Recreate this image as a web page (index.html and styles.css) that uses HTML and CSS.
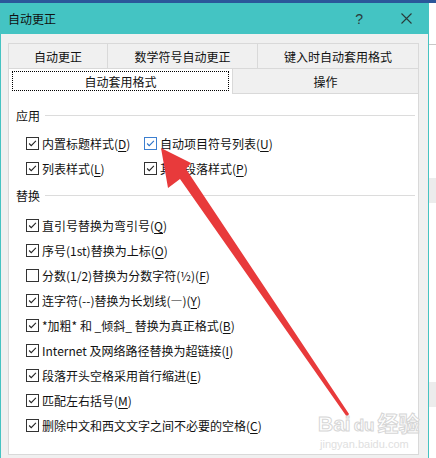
FILE: index.html
```html
<!DOCTYPE html>
<html lang="zh-CN">
<head>
<meta charset="utf-8">
<link rel="stylesheet" href="styles.css">
</head>
<body>
<div class="topstrip"></div>
<div class="screen">
  <div class="dialog">
    <div class="titlebar">
      <span class="title">自动更正</span>
      <span class="help">?</span>
      <span class="close"><svg width="11" height="11" viewBox="0 0 11 11"><path d="M0.5 0.5 L10.5 10.5 M10.5 0.5 L0.5 10.5" stroke="#2a3a3a" stroke-width="1.1" fill="none"/></svg></span>
    </div>
    <div class="body">
      <div class="tabrow">
        <div class="tab first w100">自动更正</div>
        <div class="tab w150">数学符号自动更正</div>
        <div class="tab w161">键入时自动套用格式</div>
      </div>
      <div class="tabrow">
        <div class="tab first sel"><span class="focus">自动套用格式</span></div>
        <div class="tab w186">操作</div>
      </div>
      <div class="panel">
        <div class="group-head head-apply"><span>应用</span><i class="rule"></i></div>
        <div class="grid-apply">
          <label class="item"><span class="cb on"><svg viewBox="0 0 13 13"><path d="M2.5 6.5 L5 9 L10.5 3.5"/></svg></span><span class="txt">内置标题样式(<u>D</u>)</span></label>
          <label class="item"><span class="cb on blue"><svg viewBox="0 0 13 13"><path d="M2.5 6.5 L5 9 L10.5 3.5"/></svg></span><span class="txt">自动项目符号列表(<u>U</u>)</span></label>
          <label class="item"><span class="cb on"><svg viewBox="0 0 13 13"><path d="M2.5 6.5 L5 9 L10.5 3.5"/></svg></span><span class="txt">列表样式(<u>L</u>)</span></label>
          <label class="item"><span class="cb on"><svg viewBox="0 0 13 13"><path d="M2.5 6.5 L5 9 L10.5 3.5"/></svg></span><span class="txt">其他段落样式(<u>P</u>)</span></label>
        </div>
        <div class="group-head head-replace"><span>替换</span><i class="rule"></i></div>
        <div class="list-replace">
          <label class="item"><span class="cb on"><svg viewBox="0 0 13 13"><path d="M2.5 6.5 L5 9 L10.5 3.5"/></svg></span><span class="txt">直引号替换为弯引号(<u>Q</u>)</span></label>
          <label class="item"><span class="cb on"><svg viewBox="0 0 13 13"><path d="M2.5 6.5 L5 9 L10.5 3.5"/></svg></span><span class="txt">序号(1st)替换为上标(<u>O</u>)</span></label>
          <label class="item"><span class="cb"></span><span class="txt">分数(1/2)替换为分数字符(½)(<u>F</u>)</span></label>
          <label class="item"><span class="cb on"><svg viewBox="0 0 13 13"><path d="M2.5 6.5 L5 9 L10.5 3.5"/></svg></span><span class="txt">连字符(--)替换为长划线(—)(<u>Y</u>)</span></label>
          <label class="item"><span class="cb on"><svg viewBox="0 0 13 13"><path d="M2.5 6.5 L5 9 L10.5 3.5"/></svg></span><span class="txt">*加粗* 和 _倾斜_ 替换为真正格式(<u>B</u>)</span></label>
          <label class="item"><span class="cb on"><svg viewBox="0 0 13 13"><path d="M2.5 6.5 L5 9 L10.5 3.5"/></svg></span><span class="txt">Internet 及网络路径替换为超链接(<u>I</u>)</span></label>
          <label class="item"><span class="cb on"><svg viewBox="0 0 13 13"><path d="M2.5 6.5 L5 9 L10.5 3.5"/></svg></span><span class="txt">段落开头空格采用首行缩进(<u>E</u>)</span></label>
          <label class="item"><span class="cb on"><svg viewBox="0 0 13 13"><path d="M2.5 6.5 L5 9 L10.5 3.5"/></svg></span><span class="txt">匹配左右括号(<u>M</u>)</span></label>
          <label class="item"><span class="cb on"><svg viewBox="0 0 13 13"><path d="M2.5 6.5 L5 9 L10.5 3.5"/></svg></span><span class="txt">删除中文和西文文字之间不必要的空格(<u>C</u>)</span></label>
        </div>
      </div>
    </div>
  </div>
  <div class="outside">
    <div class="out-line"></div>
    <div class="out-block b1"></div>
    <div class="out-block b2"></div>
  </div>
</div>
<svg class="arrow" width="436" height="458" viewBox="0 0 436 458">
  <polygon points="161,148 191,163 186,169 349,414 347,417 180,179 168,188" fill="#e83a3b"/>
</svg>
<div class="watermark">
  <div class="wm-main">Bai<span class="du">du</span>经验</div>
  <div class="wm-sub">jingyan.baidu.com</div>
</div>
</body>
</html>
```
FILE: styles.css
```css
* { box-sizing: border-box; }
html, body { margin: 0; padding: 0; }
body {
  width: 436px;
  height: 458px;
  overflow: hidden;
  background: #ffffff;
  font-family: "Noto Sans CJK SC", "Noto Sans", sans-serif;
  font-size: 12px;
  color: #111;
  position: relative;
}
.topstrip { height: 3px; background: #2b579a; }
.screen { display: flex; height: 455px; }
.dialog {
  width: 429px;
  height: 455px;
  border-left: 1px solid #46c3c2;
  border-right: 1px solid #46c3c2;
  display: flex;
  flex-direction: column;
}
.titlebar {
  height: 31px;
  background: #44c4c3;
  display: flex;
  align-items: center;
  padding-left: 7px;
}
.title { flex: 1; color: #111; line-height: 31px; }
.help { font-family: "Liberation Sans", sans-serif; font-size: 14px; color: #2a3a3a; margin-right: 38px; }
.close { width: 11px; height: 11px; margin-right: 16px; display: flex; }
.body {
  flex: 1;
  background: #f0f0f0;
  padding: 9px 9px 3px 7px;
  display: flex;
  flex-direction: column;
}
.tabrow { display: flex; height: 25px; align-items: flex-start; }
.tab {
  height: 25px;
  border-top: 1px solid #d9d9d9;
  border-right: 1px solid #d9d9d9;
  display: flex;
  align-items: center;
  justify-content: center;
  padding-top: 1px;
  color: #111;
}
.tab.first { border-left: 1px solid #d9d9d9; }
.w100 { width: 100px; }
.w150 { width: 150px; }
.w161 { width: 161px; }
.w186 { width: 186px; }
.tab.sel {
  width: 225px;
  height: 26px;
  background: #ffffff;
  position: relative;
  z-index: 1;
  padding: 2px 3px 3px 3px;
  align-items: stretch;
}
.focus {
  flex: 1;
  border: 1px dotted #000;
  display: flex;
  align-items: center;
  justify-content: center;
}
.panel {
  height: 362px;
  background: #ffffff;
  border: 1px solid #d9d9d9;
  padding: 11px 0 0 7px;
}
.group-head {
  height: 20px;
  display: flex;
  align-items: center;
  gap: 5px;
  padding-right: 3px;
}
.rule { flex: 1; height: 1px; background: #dcdcdc; }
.head-replace { margin-top: 4px; }
.grid-apply {
  margin-top: 6px;
  display: grid;
  grid-template-columns: 118px auto;
  padding-left: 10px;
}
.list-replace {
  margin-top: 8px;
  padding-left: 10px;
  display: flex;
  flex-direction: column;
}
.item {
  height: 25px;
  display: flex;
  align-items: center;
  gap: 3px;
  white-space: nowrap;
}
.txt u { text-decoration: underline; text-underline-offset: 2px; }
.cb {
  width: 13px;
  height: 13px;
  border: 1px solid #333;
  background: #fff;
  flex: none;
  display: flex;
}
.cb svg { width: 11px; height: 11px; }
.cb svg path { fill: none; stroke: #222; stroke-width: 1.3; }
.cb.blue { border-color: #3c7fd0; }
.cb.blue svg path { stroke: #2a72c8; }
.outside { width: 7px; display: flex; flex-direction: column; }
.out-line { margin-top: 41px; height: 1px; background: #c8c8c8; }
.out-block { height: 25px; background: #ececec; }
.b1 { margin-top: 133px; }
.b2 { margin-top: 179px; }
.arrow { position: absolute; left: 0; top: 0; pointer-events: none; }
.watermark {
  position: absolute;
  left: 318px;
  top: 412px;
  color: #ffffff;
  pointer-events: none;
}
.wm-main {
  font-family: "Liberation Sans", "Noto Sans CJK SC", sans-serif;
  font-size: 21px;
  font-weight: bold;
  -webkit-text-stroke: 1px #d6d6d6;
  line-height: 24px;
  letter-spacing: 0;
}
.du { font-size: 17px; margin: 0 3px; }
.wm-sub {
  font-family: "Liberation Sans", sans-serif;
  font-size: 11px;
  color: #e0e0e0;
  line-height: 13px;
  padding-left: 2px;
}
```
